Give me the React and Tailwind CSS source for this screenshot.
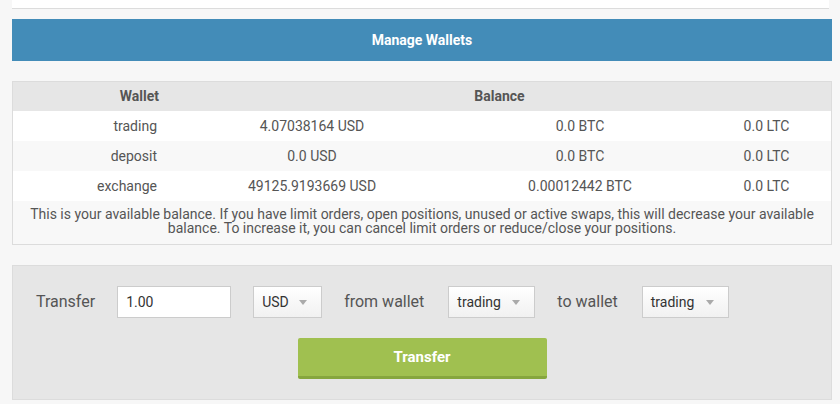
import React from 'react';

const rows = [
  { name: 'trading', usd: '4.07038164 USD', btc: '0.0 BTC', ltc: '0.0 LTC', bg: 'bg-white' },
  { name: 'deposit', usd: '0.0 USD', btc: '0.0 BTC', ltc: '0.0 LTC', bg: 'bg-[#f8f8f8]' },
  { name: 'exchange', usd: '49125.9193669 USD', btc: '0.00012442 BTC', ltc: '0.0 LTC', bg: 'bg-white' },
];

const Caret = () => (
  <span className="w-0 h-0 border-x-[4px] border-x-transparent border-t-[5px] border-t-[#aaa]" />
);

const Select = ({ value, width }) => (
  <div
    className={`${width} h-8 flex items-center justify-between pl-2 pr-[14px] border border-[#ccc] bg-linear-to-b from-white to-[#f1f1f1] text-[14px] text-[#333]`}
  >
    <span>{value}</span>
    <Caret />
  </div>
);

const App = () => {
  return (
    <div className="w-[840px] h-[404px] overflow-hidden bg-[#f7f7f7] font-['Roboto',sans-serif] text-[#555]">
      <div className="pl-3 pr-2">
        <div className="w-[817px] h-[9px] bg-white border-b border-[#dcdcdc]" />

        <div className="mt-[10px] h-[42px] bg-[#438cb8] flex items-center justify-center text-white font-bold text-[14px]">
          Manage Wallets
        </div>

        <div className="mt-5 border border-[#dcdcdc] text-[14px]">
          <div className="grid grid-cols-[155px_1fr] h-[29px] items-center bg-[#e6e6e6] font-bold">
            <div className="text-right pr-[9px]">Wallet</div>
            <div className="text-center">Balance</div>
          </div>
          {rows.map((r) => (
            <div key={r.name} className={`grid grid-cols-[155px_288px_248px_1fr] h-[30px] items-center ${r.bg}`}>
              <div className="text-right pr-[11px]">{r.name}</div>
              <div className="text-center">{r.usd}</div>
              <div className="text-center">{r.btc}</div>
              <div className="text-center pr-[2px]">{r.ltc}</div>
            </div>
          ))}
          <div className="bg-[#f8f8f8] text-center leading-[14px] pt-[6px] pb-[9px] px-3">
            This is your available balance. If you have limit orders, open positions, unused or active swaps, this will decrease your available
            balance. To increase it, you can cancel limit orders or reduce/close your positions.
          </div>
        </div>

        <div className="mt-5 border border-[#dcdcdc] bg-[#e6e6e6] pt-5 pb-5">
          <div className="flex items-center gap-[22px] pl-[23px] h-8">
            <span className="text-[16px]">Transfer</span>
            <input
              defaultValue="1.00"
              className="w-[114px] h-8 bg-white border border-[#ccc] px-2 text-[14px] text-[#333] outline-none"
            />
            <Select value="USD" width="w-[69px]" />
            <span className="text-[16px]">from wallet</span>
            <div className="flex items-center gap-[22px] ml-[2px]">
              <Select value="trading" width="w-[87px]" />
              <span className="text-[16px]">to wallet</span>
              <div className="ml-[2px]">
                <Select value="trading" width="w-[87px]" />
              </div>
            </div>
          </div>
          <div className="flex justify-center mt-5">
            <button className="w-[249px] h-[41px] bg-[#a0c050] border-b-[3px] border-[#86a63e] rounded-[2px] text-white font-bold text-[15px]">
              Transfer
            </button>
          </div>
        </div>
      </div>
    </div>
  );
};

export default App;
